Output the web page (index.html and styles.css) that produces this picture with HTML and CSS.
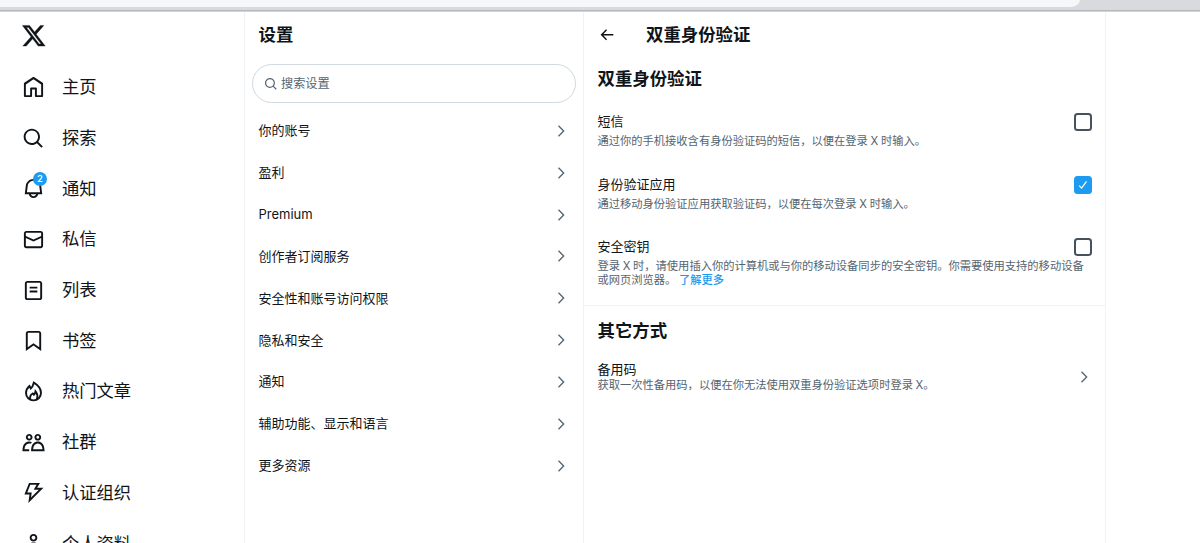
FILE: index.html
```html
<!DOCTYPE html>
<html lang="zh-CN">
<head>
<meta charset="utf-8">
<title>双重身份验证 / X</title>
<link rel="stylesheet" href="styles.css">
</head>
<body>
<svg class="defs" aria-hidden="true">
  <symbol id="chevron" viewBox="0 0 24 24"><path d="M14.586 12L7.543 4.96l1.414-1.42L17.414 12l-8.457 8.46-1.414-1.42L14.586 12z"/></symbol>
  <symbol id="search" viewBox="0 0 24 24"><path d="M10.25 3.75c-3.59 0-6.5 2.91-6.5 6.5s2.91 6.5 6.5 6.5c1.795 0 3.419-.726 4.596-1.904 1.178-1.177 1.904-2.801 1.904-4.596 0-3.59-2.91-6.5-6.5-6.5zm-8.5 6.5c0-4.694 3.806-8.5 8.5-8.5s8.5 3.806 8.5 8.5c0 1.986-.682 3.815-1.824 5.262l4.781 4.781-1.414 1.414-4.781-4.781c-1.447 1.142-3.276 1.824-5.262 1.824-4.694 0-8.5-3.806-8.5-8.5z"/></symbol>
</svg>
<div class="browser-bar"><div class="address"></div></div>
<div class="app">
  <nav class="sidebar">
    <svg class="logo" viewBox="0 0 24 24"><path d="M18.244 2.25h3.308l-7.227 8.26 8.502 11.24H16.17l-5.214-6.817L4.99 21.75H1.68l7.73-8.835L1.254 2.25H8.08l4.713 6.231zm-1.161 17.52h1.833L7.084 4.126H5.117z"/></svg>
    <a class="nav-item"><svg class="icon" viewBox="0 0 24 24"><path d="M21.591 7.146L12.52 1.157c-.316-.21-.724-.21-1.04 0l-9.071 5.99c-.26.173-.409.456-.409.757v13.183c0 .502.418.913.929.913h6.638c.511 0 .929-.41.929-.913v-7.075h3.008v7.075c0 .502.418.913.929.913h6.639c.51 0 .928-.41.928-.913V7.904c0-.301-.158-.584-.408-.758zM20 20l-4.5.01.011-7.097c0-.502-.418-.913-.928-.913H9.44c-.511 0-.929.41-.929.913L8.5 20H4V8.773l8.011-5.342L20 8.764z"/></svg><span>主页</span></a>
    <a class="nav-item"><svg class="icon"><use href="#search"/></svg><span>探索</span></a>
    <a class="nav-item"><svg class="icon" viewBox="0 0 24 24"><path d="M19.993 9.042C19.48 5.017 16.054 2 11.996 2s-7.49 3.021-7.999 7.051L2.866 18H7.1c.463 2.282 2.481 4 4.9 4s4.437-1.718 4.9-4h4.236l-1.143-8.958zM12 20c-1.306 0-2.417-.835-2.829-2h5.658c-.412 1.165-1.523 2-2.829 2zm-6.866-4l.847-6.698C6.364 6.272 8.941 4 11.996 4s5.627 2.268 6.013 5.295L18.864 16H5.134z"/></svg><b class="badge">2</b><span>通知</span></a>
    <a class="nav-item"><svg class="icon" viewBox="0 0 24 24"><path d="M1.998 5.5c0-1.381 1.119-2.5 2.5-2.5h15c1.381 0 2.5 1.119 2.5 2.5v13c0 1.381-1.119 2.5-2.5 2.5h-15c-1.381 0-2.5-1.119-2.5-2.5v-13zm2.5-.5c-.276 0-.5.224-.5.5v2.764l8 3.638 8-3.636V5.5c0-.276-.224-.5-.5-.5h-15zm15.5 5.463l-8 3.636-8-3.638V18.5c0 .276.224.5.5.5h15c.276 0 .5-.224.5-.5v-8.037z"/></svg><span>私信</span></a>
    <a class="nav-item"><svg class="icon" viewBox="0 0 24 24"><path d="M3 4.5C3 3.12 4.12 2 5.5 2h13C19.88 2 21 3.12 21 4.5v15c0 1.38-1.12 2.5-2.5 2.5h-13C4.12 22 3 20.88 3 19.5v-15zM5.5 4c-.28 0-.5.22-.5.5v15c0 .28.22.5.5.5h13c.28 0 .5-.22.5-.5v-15c0-.28-.22-.5-.5-.5h-13zM16 10H8V8h8v2zm-8 2h8v2H8v-2z"/></svg><span>列表</span></a>
    <a class="nav-item"><svg class="icon" viewBox="0 0 24 24"><path d="M4 4.5C4 3.12 5.119 2 6.5 2h11C18.881 2 20 3.12 20 4.5v18.44l-8-5.71-8 5.71V4.5zM6.5 4c-.276 0-.5.22-.5.5v14.56l6-4.29 6 4.29V4.5c0-.28-.224-.5-.5-.5h-11z"/></svg><span>书签</span></a>
    <a class="nav-item"><svg class="icon line" viewBox="0 0 24 24"><path d="M12.300 2.800c4.500 2.700 7.500 6.500 7.500 10.700a7.800 7.800 0 0 1-15.600 0c0-3 1.300-5.300 3.600-7.300l1.300 2.600C10.800 7.500 11.800 5.300 12.300 2.800z"/><path d="M8.600 20c-.6-2.800.6-4.800 2.600-5.900l1.200 1.200c.9-.8 1.500-2 1.700-3.500 2 2.600 2.600 5.500 1.200 8.400"/></svg><span>热门文章</span></a>
    <a class="nav-item"><svg class="icon" viewBox="0 0 24 24"><path d="M7.501 19.917L7.471 21H.472l.029-1.027c.184-6.618 3.736-8.977 7-8.977.963 0 1.95.212 2.87.672-.444.478-.851 1.03-1.212 1.656-.507-.204-1.054-.329-1.658-.329-2.767 0-4.57 2.223-4.938 6.004H7.56c-.023.302-.05.599-.059.918zm15.998.056L23.528 21H9.472l.029-1.027c.184-6.618 3.736-8.977 7-8.977s6.816 2.358 7 8.977zM21.437 19c-.367-3.781-2.17-6.004-4.938-6.004s-4.57 2.223-4.938 6.004h9.875zm-4.938-9c-.799 0-1.527-.279-2.116-.73-.836-.64-1.384-1.638-1.384-2.77 0-1.93 1.567-3.5 3.5-3.5s3.5 1.57 3.5 3.5c0 1.132-.548 2.13-1.384 2.77-.589.451-1.317.73-2.116.73zm-1.5-3.5c0 .827.673 1.5 1.5 1.5s1.5-.673 1.5-1.5-.673-1.5-1.5-1.5-1.5.673-1.5 1.5zM7.5 3C9.433 3 11 4.57 11 6.5S9.433 10 7.5 10 4 8.43 4 6.5 5.567 3 7.5 3zm0 2C6.673 5 6 5.673 6 6.5S6.673 8 7.5 8 9 7.327 9 6.5 8.327 5 7.5 5z"/></svg><span>社群</span></a>
    <a class="nav-item"><svg class="icon" viewBox="0 0 24 24"><path d="M7.323 2h11.443l-3 5h6.648L6.586 22.83 7.847 14H2.523l4.8-12zm1.354 2l-3.2 8h4.676l-.739 5.17L17.586 9h-5.352l3-5H8.677z"/></svg><span>认证组织</span></a>
    <a class="nav-item"><svg class="icon" viewBox="0 0 24 24"><path d="M5.651 19h12.698c-.337-1.8-1.023-3.21-1.945-4.19C15.318 13.65 13.838 13 12 13s-3.317.65-4.404 1.81c-.922.98-1.608 2.39-1.945 4.19zm.486-5.56C7.627 11.85 9.648 11 12 11s4.373.85 5.863 2.44c1.477 1.58 2.366 3.8 2.632 6.46l.11 1.1H3.395l.11-1.1c.266-2.66 1.155-4.88 2.632-6.46zM12 4c-1.105 0-2 .9-2 2s.895 2 2 2 2-.9 2-2-.895-2-2-2zM8 6c0-2.21 1.791-4 4-4s4 1.79 4 4-1.791 4-4 4-4-1.79-4-4z"/></svg><span>个人资料</span></a>
  </nav>
  <section class="settings">
    <h2 class="title">设置</h2>
    <div class="search"><svg class="search-icon"><use href="#search"/></svg><span>搜索设置</span></div>
    <a class="row"><span>你的账号</span><svg class="chevron"><use href="#chevron"/></svg></a>
    <a class="row"><span>盈利</span><svg class="chevron"><use href="#chevron"/></svg></a>
    <a class="row"><span>Premium</span><svg class="chevron"><use href="#chevron"/></svg></a>
    <a class="row"><span>创作者订阅服务</span><svg class="chevron"><use href="#chevron"/></svg></a>
    <a class="row"><span>安全性和账号访问权限</span><svg class="chevron"><use href="#chevron"/></svg></a>
    <a class="row"><span>隐私和安全</span><svg class="chevron"><use href="#chevron"/></svg></a>
    <a class="row"><span>通知</span><svg class="chevron"><use href="#chevron"/></svg></a>
    <a class="row"><span>辅助功能、显示和语言</span><svg class="chevron"><use href="#chevron"/></svg></a>
    <a class="row"><span>更多资源</span><svg class="chevron"><use href="#chevron"/></svg></a>
  </section>
  <main class="detail">
    <header class="detail-head"><svg class="back" viewBox="0 0 24 24"><path d="M7.414 13l5.043 5.04-1.414 1.42L3.586 12l7.457-7.46 1.414 1.42L7.414 11H21v2H7.414z"/></svg><h2 class="title">双重身份验证</h2></header>
    <h3 class="section-title">双重身份验证</h3>
    <div class="option">
      <div class="option-head"><span>短信</span><i class="check"></i></div>
      <p class="hint">通过你的手机接收含有身份验证码的短信，以便在登录 X 时输入。</p>
    </div>
    <div class="option">
      <div class="option-head"><span>身份验证应用</span><i class="check checked"><svg class="tick" viewBox="0 0 12 12"><path d="M2.200 6.700l2.400 2.400L9.500 2.400"/></svg></i></div>
      <p class="hint">通过移动身份验证应用获取验证码，以便在每次登录 X 时输入。</p>
    </div>
    <div class="option last">
      <div class="option-head"><span>安全密钥</span><i class="check"></i></div>
      <p class="hint">登录 X 时，请使用插入你的计算机或与你的移动设备同步的安全密钥。你需要使用支持的移动设备<br>或网页浏览器。 <a class="link">了解更多</a></p>
    </div>
    <h3 class="section-title other">其它方式</h3>
    <div class="backup">
      <div><div class="backup-name">备用码</div><p class="hint">获取一次性备用码，以便在你无法使用双重身份验证选项时登录 X。</p></div>
      <svg class="chevron"><use href="#chevron"/></svg>
    </div>
  </main>
</div>
</body>
</html>
```
FILE: styles.css
```css
* { box-sizing: border-box; }
body {
  margin: 0;
  height: 543px;
  overflow: hidden;
  background: #fff;
  color: #0f1419;
  font: 13px/18px Inter, "Noto Sans CJK SC", sans-serif;
}
h2, h3, p { margin: 0; }
svg { display: block; flex: none; fill: currentColor; }
.defs { position: absolute; width: 0; height: 0; }
.browser-bar {
  height: 11px;
  background: #d9dade;
  border-bottom: 1px solid #b6b7bc;
  box-shadow: 0 1px #d3d4d8;
}
.address {
  width: 1080px;
  height: 7px;
  background: #f5f7f8;
  border-bottom-right-radius: 10px 7px;
}
.app { display: flex; height: 531px; margin-top: 1px; }

.sidebar { width: 244px; padding: 11px 0 0 21.500px; }
.logo {
  width: 25.500px;
  height: 25.500px;
  margin: 0 0 13.500px -0.500px;
  stroke: currentColor;
  stroke-width: 0.300;
}
.nav-item {
  position: relative;
  display: flex;
  align-items: center;
  gap: 17.500px;
  height: 50.700px;
  font-size: 17.300px;
  line-height: 24px;
}
.icon { width: 23px; height: 23px; }
.line { fill: none; stroke: currentColor; stroke-width: 2; }
.badge {
  position: absolute;
  left: 11.500px;
  top: 8.500px;
  width: 14px;
  height: 14px;
  border-radius: 50%;
  background: #1d9bf0;
  color: #fff;
  font-size: 9.500px;
  font-weight: 500;
  line-height: 14px;
  text-align: center;
}

.settings {
  width: 339px;
  border-left: 1px solid #eff3f4;
  padding: 0 7.500px 0 6.500px;
}
.title { font-size: 17.400px; line-height: 24px; font-weight: 700; }
.settings .title { padding: 11px 7px 17px; }
.search {
  display: flex;
  align-items: center;
  gap: 3.500px;
  height: 39px;
  padding-left: 11px;
  border: 1px solid #cfd9de;
  border-radius: 20px;
  color: #536471;
  font-size: 12.200px;
  margin-bottom: 6.500px;
}
.search-icon { width: 14px; height: 14px; }
.row {
  display: flex;
  align-items: center;
  justify-content: space-between;
  height: 41.850px;
  padding: 0 7px;
}
.chevron { width: 16px; height: 16px; color: #536471; }
.row .chevron { margin-top: 1px; }

.detail {
  width: 523px;
  border: solid #eff3f4;
  border-width: 0 1px;
}
.detail-head { display: flex; align-items: center; gap: 31px; padding: 11px 13.500px 0; }
.back { width: 17.500px; height: 17.500px; }
.section-title { padding: 20px 13.500px 0; font-size: 17.400px; line-height: 24px; }
.option { height: 62.700px; padding: 0 13.500px; }
.section-title + .option { margin-top: 22px; }
.option-head { display: flex; justify-content: space-between; height: 21px; line-height: 17px; }
.check {
  width: 18px;
  height: 18px;
  border: 2px solid #46535f;
  border-radius: 3.500px;
}
.checked { border-color: #1d9bf0; background: #1d9bf0; }
.tick { width: 12px; height: 12px; margin: 1px; fill: none; stroke: #fff; stroke-width: 1.200; }
.hint {
  color: #536471;
  font-size: 11.270px;
  line-height: 14px;
  word-spacing: -0.500px;
  white-space: nowrap;
}
.link { color: #1d9bf0; font-weight: 500; }
.last { height: 68px; border-bottom: 1px solid #eff3f4; }
.other { padding-top: 12.500px; }
.backup {
  display: flex;
  align-items: center;
  justify-content: space-between;
  padding: 18.500px 13.500px 0;
}
.backup-name { line-height: 17px; }
```
